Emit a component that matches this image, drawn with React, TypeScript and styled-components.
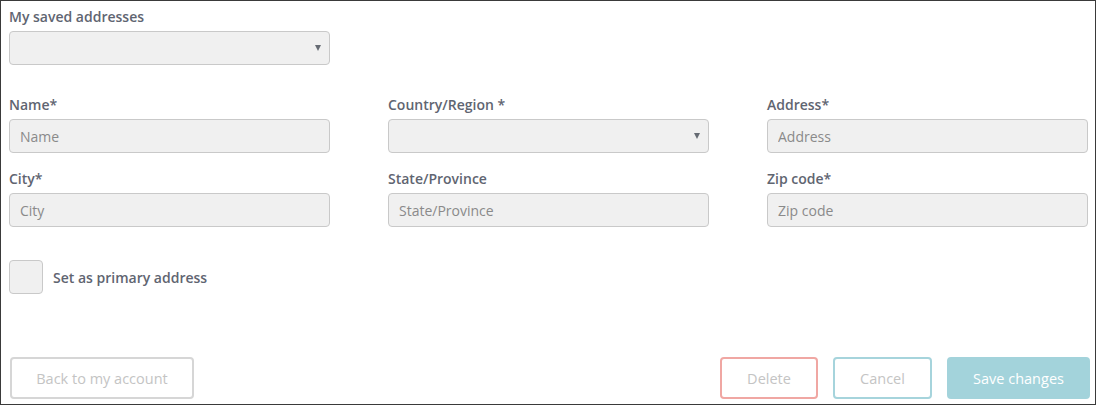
import React from 'react';
import styled, { createGlobalStyle } from 'styled-components';

const GlobalStyle = createGlobalStyle`
    html, body {
        margin: 0;
        padding: 0;
        background: #ffffff;
    }
    * {
        box-sizing: border-box;
    }
`;

const StyledFrame = styled.div`
    background: #ffffff;
    border: 1px solid #3a3a3a;
    display: flex;
    flex-direction: column;
    font-family: "Open Sans", "Liberation Sans", sans-serif;
    height: 405px;
    padding: 6px 7px 5px 8px;
    width: 1096px;
`;

const StyledField = styled.div`
    display: flex;
    flex-direction: column;
    gap: 4px;
`;

const StyledSavedField = styled(StyledField)`
    width: 321px;
`;

const StyledLabel = styled.label`
    color: #5f6571;
    font-size: 14px;
    font-weight: 600;
    line-height: 20px;
`;

const StyledInput = styled.input`
    background: #f0f0f0;
    border: 1px solid #c9c9c9;
    border-radius: 4px;
    color: #555;
    font-family: inherit;
    font-size: 14px;
    height: 34px;
    outline: none;
    padding: 0 10px;
    width: 100%;

    &::placeholder {
        color: #8a8a8a;
    }
`;

const StyledSelect = styled.div`
    align-items: center;
    background: #f0f0f0;
    border: 1px solid #c9c9c9;
    border-radius: 4px;
    display: flex;
    height: 34px;
    justify-content: flex-end;
    padding-right: 8px;

    &::after {
        border-left: 3px solid transparent;
        border-right: 3px solid transparent;
        border-top: 6px solid #666b73;
        content: '';
        display: block;
        height: 0;
        width: 0;
    }
`;

const StyledGrid = styled.div`
    display: grid;
    gap: 16px 58px;
    grid-template-columns: repeat(3, 321px);
    margin-top: 30px;
`;

const StyledCheckRow = styled.label`
    align-items: center;
    color: #5f6571;
    display: flex;
    font-size: 14px;
    font-weight: 600;
    gap: 10px;
    margin-top: 33px;
`;

const StyledCheckbox = styled.span`
    background: #f0f0f0;
    border: 1px solid #c9c9c9;
    border-radius: 4px;
    display: block;
    height: 34px;
    width: 34px;
`;

const StyledFooter = styled.div`
    align-items: flex-end;
    display: flex;
    gap: 15px;
    margin-right: -2px;
    margin-top: auto;
    padding-left: 1px;
`;

const StyledSpacer = styled.div`
    flex: 1;
`;

type Tone = 'neutral' | 'danger' | 'info' | 'primary';

const BORDERS: Record<Tone, string> = {
    neutral: '#d6d6d6',
    danger: '#f0a7a3',
    info: '#a6d4dc',
    primary: '#a3d3db',
};

const StyledButton = styled.button<{ $tone: Tone; $width: number }>`
    background: ${props => props.$tone === 'primary' ? '#a3d3db' : '#ffffff'};
    border: 2px solid ${props => BORDERS[props.$tone]};
    border-radius: 4px;
    color: ${props => props.$tone === 'primary' ? '#ffffff' : '#c4c4c4'};
    font-family: inherit;
    font-size: 14.5px;
    height: 42px;
    padding: 0;
    width: ${props => props.$width}px;
`;

const FIELDS = [
    { label: 'Name*', placeholder: 'Name' },
    { label: 'Country/Region *', select: true },
    { label: 'Address*', placeholder: 'Address' },
    { label: 'City*', placeholder: 'City' },
    { label: 'State/Province', placeholder: 'State/Province' },
    { label: 'Zip code*', placeholder: 'Zip code' },
];

export default function App() {
    return <>
        <GlobalStyle />
        <StyledFrame>
            <StyledSavedField>
                <StyledLabel>My saved addresses</StyledLabel>
                <StyledSelect />
            </StyledSavedField>

            <StyledGrid>
                {FIELDS.map(field =>
                    <StyledField key={field.label}>
                        <StyledLabel>{field.label}</StyledLabel>
                        {field.select
                            ? <StyledSelect />
                            : <StyledInput placeholder={field.placeholder} />}
                    </StyledField>
                )}
            </StyledGrid>

            <StyledCheckRow>
                <StyledCheckbox />
                Set as primary address
            </StyledCheckRow>

            <StyledFooter>
                <StyledButton $tone="neutral" $width={184}>Back to my account</StyledButton>
                <StyledSpacer />
                <StyledButton $tone="danger" $width={98}>Delete</StyledButton>
                <StyledButton $tone="info" $width={99}>Cancel</StyledButton>
                <StyledButton $tone="primary" $width={143}>Save changes</StyledButton>
            </StyledFooter>
        </StyledFrame>
    </>
}
